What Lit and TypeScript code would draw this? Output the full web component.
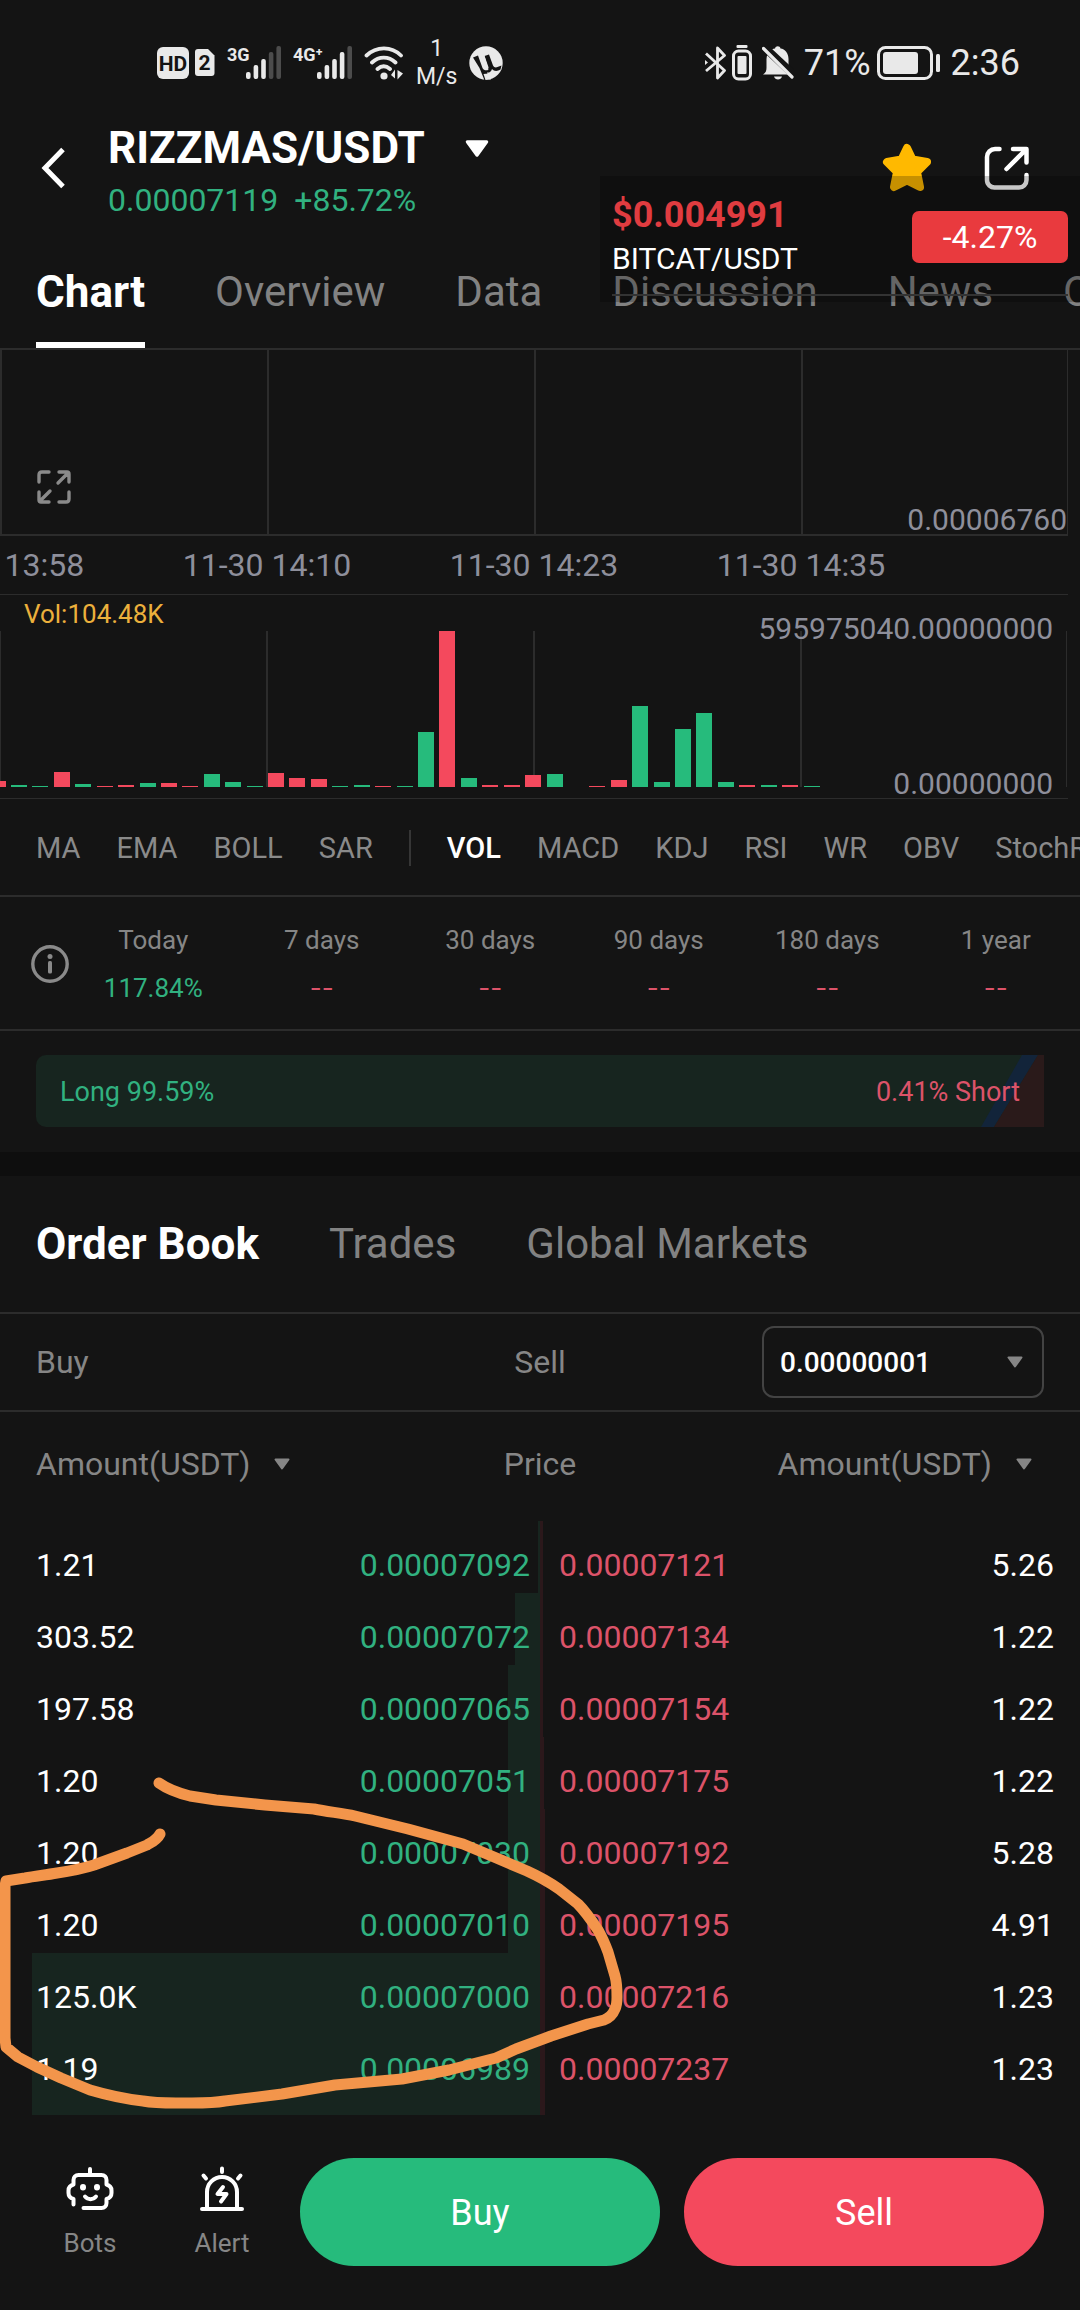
import { LitElement, html, svg, css } from "lit";
import { customElement, state } from "lit/decorators.js";
import { classMap } from "lit/directives/class-map.js";
import { styleMap } from "lit/directives/style-map.js";

type Side = "up" | "down";

/** Volume bars in drawing order: [slot, side, height]. */
const VOLUME: [number, Side, number][] = [
  [0, "down", 6], [1, "up", 2], [2, "up", 1], [3, "down", 15], [4, "up", 3],
  [5, "down", 1], [6, "down", 2], [7, "up", 4], [8, "down", 4], [9, "down", 1],
  [10, "up", 13], [11, "up", 5], [12, "up", 1], [13, "down", 14], [14, "down", 9],
  [15, "down", 8], [16, "up", 1], [17, "up", 2], [18, "down", 1], [19, "up", 1],
  [20, "up", 55], [21, "down", 156], [22, "up", 9], [23, "down", 2], [24, "down", 2],
  [25, "down", 12], [26, "up", 13], [28, "down", 1], [29, "down", 7], [30, "up", 81],
  [31, "up", 5], [32, "up", 58], [33, "up", 74], [34, "up", 5], [35, "down", 2],
  [36, "up", 2], [37, "down", 2], [38, "up", 1],
];

interface Level {
  bidAmount: string;
  bid: string;
  ask: string;
  askAmount: string;
  bidDepth: number;
  askDepth: number;
}

/** Depths are percentages of the full book width. */
const LEVELS: Level[] = [
  { bidAmount: "1.21", bid: "0.00007092", ask: "0.00007121", askAmount: "5.26", bidDepth: 0.2, askDepth: 0.3 },
  { bidAmount: "303.52", bid: "0.00007072", ask: "0.00007134", askAmount: "1.22", bidDepth: 2.3, askDepth: 0.3 },
  { bidAmount: "197.58", bid: "0.00007065", ask: "0.00007154", askAmount: "1.22", bidDepth: 3, askDepth: 0.3 },
  { bidAmount: "1.20", bid: "0.00007051", ask: "0.00007175", askAmount: "1.22", bidDepth: 3, askDepth: 0.4 },
  { bidAmount: "1.20", bid: "0.00007030", ask: "0.00007192", askAmount: "5.28", bidDepth: 3, askDepth: 0.5 },
  { bidAmount: "1.20", bid: "0.00007010", ask: "0.00007195", askAmount: "4.91", bidDepth: 3, askDepth: 0.5 },
  { bidAmount: "125.0K", bid: "0.00007000", ask: "0.00007216", askAmount: "1.23", bidDepth: 47, askDepth: 0.5 },
  { bidAmount: "1.19", bid: "0.00006989", ask: "0.00007237", askAmount: "1.23", bidDepth: 47, askDepth: 0.5 },
];

const STATS: [string, string][] = [
  ["Today", "117.84%"],
  ["7 days", "--"],
  ["30 days", "--"],
  ["90 days", "--"],
  ["180 days", "--"],
  ["1 year", "--"],
];

const caret = (cls: string) => html`
  <svg class=${cls} viewBox="0 0 16 12" aria-hidden="true">
    <path d="M1.5 1.5h13L8 10.500z" fill="currentColor" stroke="currentColor" stroke-width="2" stroke-linejoin="round" />
  </svg>
`;

const signal = (label: string, start: number, width: number, lit: number) => html`
  <svg width=${width} height="36" viewBox="0 0 ${width} 36" aria-hidden="true">
    <text x="0" y="16" class="net">${label}</text>
    ${[27, 20, 14, 7, 1].map(
      (top, i) => svg`<rect x=${start + i * 7.6} y=${top} width="4.600" height=${34 - top} rx="2"
        fill=${i < lit ? "#e9e9e9" : "#4c4c4c"} />`,
    )}
  </svg>
`;

@customElement("app-root")
export class AppRoot extends LitElement {
  @state() private section = "Chart";
  @state() private book = "Order Book";
  @state() private indicator = "VOL";

  static styles = css`
    :host {
      display: block;
      background: #141414;
      color: #fff;
      font-family: Roboto, "Liberation Sans", sans-serif;
      font-size: 32px;
      line-height: 40px;
      overflow: hidden;
      --line: #2c2c2c;
      --muted: #868686;
      --axis: #8e8f9b;
      --up: #26bb7c;
      --down: #f4495d;
      --up-text: #31b180;
      --down-text: #dc5369;
    }
    * { box-sizing: border-box; }
    svg { display: block; flex: none; }
    button {
      appearance: none;
      border: 0;
      margin: 0;
      padding: 0;
      background: none;
      color: inherit;
      font: inherit;
      cursor: pointer;
      white-space: nowrap;
    }
    .page { position: relative; }

    .status {
      display: flex;
      justify-content: space-between;
      align-items: center;
      height: 112px;
      padding: 14px 60px 0 157px;
      color: #e9e9e9;
      font-size: 36px;
    }
    .status-group { display: flex; align-items: center; gap: 12px; }
    .status-group.system { gap: 10px; }
    .tight { display: flex; align-items: center; gap: 6px; }
    .rate { text-align: center; font-size: 23px; line-height: 28px; }
    .net { font: 700 18px Roboto, sans-serif; fill: #e9e9e9; }
    .hd { font: 700 21px Roboto, sans-serif; fill: #141414; }

    .header { display: flex; padding: 12px 50px 0 36px; }
    .icon-button { height: 88px; display: flex; align-items: center; }
    .back { width: 72px; }
    .pair { flex: 1; display: flex; flex-direction: column; gap: 10px; }
    .pair-name {
      display: flex;
      align-items: center;
      gap: 40px;
      margin: 0;
      font-size: 44px;
      line-height: 48px;
      font-weight: 700;
    }
    .caret-big { width: 24px; height: 19px; }
    .pair-price { display: flex; gap: 16px; line-height: 36px; color: var(--up-text); }
    .header-actions { display: flex; gap: 52px; }

    .ticker {
      position: absolute;
      top: 176px;
      right: 0;
      width: 480px;
      padding: 0 12px 6px;
      background: rgba(0, 0, 0, 0.22);
    }
    .ticker-inner {
      display: flex;
      justify-content: space-between;
      align-items: center;
      padding: 19px 0 15px;
      border-bottom: 2px solid #333;
    }
    .ticker-price { font-size: 36px; font-weight: 700; color: #e03c40; margin-bottom: 4px; }
    .ticker-pair { font-size: 30px; }
    .ticker-badge {
      width: 156px;
      padding: 6px 0;
      border-radius: 7px;
      background: #e93a3e;
      text-align: center;
    }

    .tabs {
      display: flex;
      gap: 70px;
      padding-left: 36px;
      border-bottom: 2px solid var(--line);
      font-size: 42px;
      line-height: 48px;
      color: #828282;
      overflow: hidden;
    }
    .tab { padding: 50px 0 26px; border-bottom: 6px solid transparent; }
    .tab.active { color: #fff; font-size: 44px; font-weight: 700; border-color: #fff; }

    .chart { margin-right: 12px; overflow-x: clip; color: var(--axis); }
    .price-grid {
      display: grid;
      grid-template-columns: repeat(4, 1fr);
      height: 186px;
      border-bottom: 2px solid var(--line);
    }
    .price-cell { border-left: 2px solid var(--line); display: flex; align-items: flex-end; }
    .price-cell:last-child {
      border-right: 1px solid var(--line);
      justify-content: flex-end;
      font-size: 30px;
      line-height: 28px;
    }
    .expand { margin: 0 0 30px 35px; }
    .times {
      display: grid;
      grid-template-columns: repeat(4, 25%);
      margin-left: -12.5%;
      width: 100%;
      padding: 9px 0;
      text-align: center;
      white-space: nowrap;
    }
    .volume {
      position: relative;
      border-top: 1px solid var(--line);
      border-bottom: 1px solid var(--line);
      padding: 36px 0 11px;
    }
    .volume-plot { width: 100%; height: 156px; }
    .up { fill: var(--up); }
    .down { fill: var(--down); }
    .grid-line { fill: var(--line); }
    .volume-label { position: absolute; left: 24px; top: 0; font-size: 26px; line-height: 38px; color: #ecb03c; }
    .scale {
      position: absolute;
      inset: 20px 15px 0 0;
      display: flex;
      flex-direction: column;
      justify-content: space-between;
      align-items: flex-end;
      font-size: 30px;
      line-height: 28px;
    }

    .indicators {
      display: flex;
      align-items: center;
      gap: 36px;
      height: 98px;
      padding: 2px 0 0 36px;
      border-bottom: 2px solid var(--line);
      font-size: 29px;
      color: #8a8a8a;
      overflow: hidden;
    }
    .indicators .active { color: #fff; font-weight: 500; }
    .divider { flex: none; width: 2px; height: 36px; background: #363636; }

    .stats {
      display: flex;
      align-items: center;
      padding: 27px 0 25px 31px;
      border-bottom: 2px solid var(--line);
      font-size: 26px;
      line-height: 32px;
    }
    .stat-list { flex: 1; display: grid; grid-template-columns: repeat(6, 1fr); margin: 0; text-align: center; }
    .stat { display: flex; flex-direction: column; gap: 16px; }
    .stat dt { color: var(--muted); }
    .stat dd { margin: 0; color: var(--down-text); }
    .stat dd.none { font-family: Inter, sans-serif; }
    .stat dd.gain { color: var(--up-text); }

    .ratio-section { padding: 24px 36px 25px; border-bottom: 24px solid #0e0e0e; }
    .ratio {
      position: relative;
      display: flex;
      justify-content: space-between;
      align-items: center;
      height: 72px;
      padding: 2px 24px 0;
      border-radius: 10px 0 0 10px;
      background: #17251f;
      font-size: 27px;
      color: var(--up-text);
    }
    .ratio-edge { position: absolute; right: 0; top: 0; width: 66px; height: 72px; }
    .ratio-short { position: relative; color: var(--down-text); }

    .book-tabs .tab { padding: 44px 0; border: 0; }

    .filter {
      display: grid;
      grid-template-columns: 1fr auto 1fr;
      align-items: center;
      padding: 12px 36px;
      border-bottom: 2px solid var(--line);
      color: var(--muted);
    }
    .precision { display: grid; align-items: center; justify-self: end; width: 282px; }
    .precision select,
    .precision svg { grid-area: 1 / 1; }
    .precision svg { justify-self: end; margin-right: 21px; pointer-events: none; }
    .precision select {
      appearance: none;
      width: 100%;
      height: 72px;
      padding: 0 48px 0 16px;
      border: 2px solid #434343;
      border-radius: 12px;
      background: transparent;
      color: #fff;
      font: 500 28px Roboto, sans-serif;
    }
    .caret-small { width: 16px; height: 12px; }

    .book { position: relative; }
    table { width: 100%; table-layout: fixed; border-collapse: collapse; }
    .amount-col { width: 30%; }
    th { padding: 32px 0 37px; font-weight: 400; color: var(--muted); text-align: center; }
    th:first-child { text-align: left; padding-left: 36px; }
    th:last-child { text-align: right; padding-right: 48px; }
    .sort { display: inline-flex; align-items: center; gap: 24px; }
    .level {
      background: linear-gradient(
        90deg,
        transparent calc(50% - var(--bid)),
        #17251f calc(50% - var(--bid)) 50%,
        #2b181b 50% calc(50% + var(--ask)),
        transparent calc(50% + var(--ask))
      );
    }
    td { padding: 24px 0 8px; }
    td:first-child { padding-left: 36px; }
    td:last-child { padding-right: 26px; text-align: right; }
    .bid { padding-right: 10px; text-align: right; color: var(--up-text); }
    .ask { padding-left: 19px; color: var(--down-text); }
    .next-level { height: 18px; }
    .marker { position: absolute; left: 0; bottom: 0; width: 100%; pointer-events: none; }

    .footer { display: flex; align-items: center; padding: 43px 36px 44px 24px; }
    .tools { display: flex; width: 276px; flex: none; }
    .tool {
      width: 132px;
      display: flex;
      flex-direction: column;
      align-items: center;
      gap: 15px;
      font-size: 26px;
      line-height: 32px;
      color: var(--muted);
    }
    .tool svg { color: #fff; }
    .trades { flex: 1; display: flex; gap: 24px; }
    .trade { flex: 1; height: 108px; padding-top: 2px; border-radius: 54px; font-size: 36px; }
    .buy { background: var(--up); }
    .sell { background: var(--down); }
  `;

  private statusBar() {
    return html`
      <div class="status">
        <div class="status-group">
          <div class="tight">
            <svg width="32" height="32" viewBox="0 0 32 32" aria-hidden="true">
              <rect width="32" height="32" rx="6" fill="#e9e9e9" />
              <text x="16" y="23.500" text-anchor="middle" class="hd">HD</text>
            </svg>
            <svg width="20" height="28" viewBox="0 0 20 28" aria-hidden="true">
              <path d="M3 0h10l6.500 6.500V24a3 3 0 0 1-3 3H3a3 3 0 0 1-3-3V3a3 3 0 0 1 3-3z" fill="#e9e9e9" />
              <text x="9.500" y="21" text-anchor="middle" class="hd">2</text>
            </svg>
          </div>
          ${signal("3G", 19, 54, 3)} ${signal("4G⁺", 24, 59, 4)}
          <svg width="40" height="36" viewBox="0 0 40 36" fill="none" stroke="#e9e9e9" stroke-width="3.800" stroke-linecap="round" aria-hidden="true">
            <path d="M2.500 10.500C12.500 1 27.500 1 37 10.500M8 17.500c7-6.500 16.500-6.500 23.500 0M13.500 24c4-3.500 8.500-3.500 12.500 0" />
            <circle cx="20" cy="31" r="3.600" fill="#e9e9e9" stroke="none" />
            <path d="M27 30l4-5.500v9M33.500 34.500v-9.500l5.500 3.500z" fill="#e9e9e9" stroke="none" />
          </svg>
          <div class="rate"><div>1</div><div>M/s</div></div>
          <svg width="34" height="34" viewBox="0 0 34 34" aria-hidden="true">
            <circle cx="17" cy="17" r="16.700" fill="#e9e9e9" />
            <path d="M4 11.500l5-2 4.500 12.500c1 2.500 4.500 3 6 1.500L15.500 10l4.500-1.500 4 11c.800 2 3 2.500 4.500 1.500l4-1.500-1 4c-3 2-6.500 2-8.500-.5-1 3-3 4-5 3.500l3 8-5 1-5.500-13.500z" fill="#141414" />
            <path d="M13.500 10.500l2-.7 4 11.500c.500 1.700-2.800 2.600-3.500.7zM19.500 27.500l2.500 6-5.500.5-2-6z" fill="#e9e9e9" />
          </svg>
        </div>
        <div class="status-group system">
          <div class="tight">
            <svg width="21" height="36" viewBox="0 0 21 36" fill="none" stroke="#e9e9e9" stroke-width="2.800" stroke-linejoin="round" aria-hidden="true">
              <path d="M1 8.500l18.500 17-7 7.500V3l7 7.500L1 26" />
              <path d="M0 15l3 2.500L0 20z" fill="#e9e9e9" stroke="none" />
            </svg>
            <svg width="20" height="36" viewBox="0 0 20 36" aria-hidden="true">
              <rect x="4.500" y="0" width="11" height="3" rx="1" fill="#e9e9e9" />
              <rect x="1.500" y="6" width="17" height="28" rx="5" fill="none" stroke="#e9e9e9" stroke-width="3" />
              <rect x="5.500" y="11" width="9" height="18" rx="1" fill="#e9e9e9" />
            </svg>
          </div>
          <svg width="32" height="36" viewBox="0 0 32 36" aria-hidden="true">
            <path d="M1 29.500c3-2 3.500-4 3.500-7V14C5 7 9 4 13 3.500c.5-3 5-3 5.500 0C23 4 26.500 8 26.500 14v8c0 4 1 5 3.500 7.500z" fill="#e9e9e9" />
            <path d="M12 31.500h8c-1 4-7 4-8 0z" fill="#e9e9e9" />
            <path d="M0 0L32 30" stroke="#141414" stroke-width="8" />
            <path d="M1.500 3.500L30 32" stroke="#e9e9e9" stroke-width="3.200" stroke-linecap="round" />
          </svg>
          <div class="tight">
            <span>71%</span>
            <svg width="64" height="34" viewBox="0 0 64 34" aria-hidden="true">
              <rect x="1.500" y="1.500" width="53" height="31" rx="7" fill="none" stroke="#e9e9e9" stroke-width="3" />
              <rect x="6" y="6" width="35" height="22" rx="3" fill="#e9e9e9" />
              <rect x="59" y="8" width="4" height="18" rx="1.500" fill="#e9e9e9" />
            </svg>
          </div>
          <span>2:36</span>
        </div>
      </div>
    `;
  }

  private header() {
    return html`
      <header class="header">
        <button class="icon-button back" aria-label="Back">
          <svg width="32" height="42" viewBox="0 0 32 42" fill="none" stroke="#fff" stroke-width="5" aria-hidden="true">
            <path d="M27 2.500L9 21l18 18.500" />
          </svg>
        </button>
        <div class="pair">
          <h1 class="pair-name">RIZZMAS/USDT ${caret("caret-big")}</h1>
          <div class="pair-price"><span>0.00007119</span><span>+85.72%</span></div>
        </div>
        <div class="header-actions">
          <button class="icon-button" aria-label="Favorite">
            <svg width="50" height="50" viewBox="0 0 50 50" aria-hidden="true">
              <path d="M25 5l5.500 11.500L45 19 35 29l3 15-13-6.500L12 44l3-15L5 19l14.500-2.500z" fill="#ffb900" stroke="#ffb900" stroke-width="8" stroke-linejoin="round" />
            </svg>
          </button>
          <button class="icon-button" aria-label="Share">
            <svg width="46" height="46" viewBox="0 0 46 46" fill="none" stroke="#fff" stroke-width="4.500" stroke-linecap="round" aria-hidden="true">
              <path d="M15.500 4H11a8 8 0 0 0-8 8v23a7.500 7.500 0 0 0 8 7.500h24a7.500 7.500 0 0 0 7.500-7.500v-5" />
              <path d="M29 4h13.500v13.500M41 5.500L22.500 24" stroke-linejoin="round" />
            </svg>
          </button>
        </div>
      </header>
    `;
  }

  private tabList(cls: string, names: string[], current: string, pick: (n: string) => void) {
    return html`
      <nav class="tabs ${cls}">
        ${names.map(
          (n) => html`<button class=${classMap({ tab: true, active: n === current })} @click=${() => pick(n)}>${n}</button>`,
        )}
      </nav>
    `;
  }

  private chart() {
    return html`
      <section class="chart" aria-label="Price chart">
        <div class="price-grid">
          <div class="price-cell">
            <button class="expand" aria-label="Full screen">
              <svg width="34" height="34" viewBox="0 0 34 34" fill="none" stroke="#8a8a8a" stroke-width="3.400" stroke-linecap="round" stroke-linejoin="round" aria-hidden="true">
                <path d="M2 12V5q0-3 3-3h7M22 2h8q2 0 2 2v8M31 3L21 13M2 22v8q0 2 2 2h8M3 31l10-10M32 22v7q0 3-3 3h-7" />
              </svg>
            </button>
          </div>
          <div class="price-cell"></div>
          <div class="price-cell"></div>
          <div class="price-cell"><span>0.00006760</span></div>
        </div>
        <div class="times">
          <span>11-30 13:58</span><span>11-30 14:10</span><span>11-30 14:23</span><span>11-30 14:35</span>
        </div>
        <div class="volume">
          <svg class="volume-plot" viewBox="0 0 1068 156" preserveAspectRatio="none" aria-hidden="true">
            ${[0, 267, 534, 801, 1067].map(
              (x) => svg`<rect class="grid-line" x=${x ? x - 1 : 0} y="0" width=${x && x < 1067 ? 2 : 1} height="156" />`,
            )}
            ${VOLUME.map(
              ([slot, side, h]) =>
                svg`<rect class=${side} x=${Math.round(slot * 21.42 - 10.4)} y=${156 - h} width="16" height=${h} />`,
            )}
          </svg>
          <span class="volume-label">Vol:104.48K</span>
          <div class="scale"><span>595975040.00000000</span><span>0.00000000</span></div>
        </div>
      </section>
    `;
  }

  private indicators() {
    const item = (n: string) => html`
      <button class=${classMap({ active: n === this.indicator })} @click=${() => (this.indicator = n)}>${n}</button>
    `;
    return html`
      <div class="indicators">
        ${["MA", "EMA", "BOLL", "SAR"].map(item)}
        <span class="divider"></span>
        ${["VOL", "MACD", "KDJ", "RSI", "WR", "OBV", "StochRSI"].map(item)}
      </div>
    `;
  }

  private stats() {
    return html`
      <section class="stats">
        <button aria-label="About performance">
          <svg width="38" height="40" viewBox="0 0 38 40" aria-hidden="true">
            <circle cx="19" cy="20" r="17.200" fill="none" stroke="#8a8a8a" stroke-width="3.400" />
            <circle cx="19" cy="12.500" r="2.500" fill="#8a8a8a" />
            <rect x="17" y="17" width="4" height="12.500" rx="1.500" fill="#8a8a8a" />
          </svg>
        </button>
        <dl class="stat-list">
          ${STATS.map(
            ([label, value]) => html`
              <div class="stat">
                <dt>${label}</dt>
                <dd class=${value === "--" ? "none" : "gain"}>${value}</dd>
              </div>
            `,
          )}
        </dl>
      </section>
      <section class="ratio-section">
        <div class="ratio">
          <span>Long 99.59%</span>
          <svg class="ratio-edge" viewBox="0 0 66 72" aria-hidden="true">
            <path d="M44 0h16L16 72H3z" fill="#12243a" />
            <path d="M60 0h6v72H16z" fill="#2a1a1a" />
          </svg>
          <span class="ratio-short">0.41% Short</span>
        </div>
      </section>
    `;
  }

  private depth(l: Level) {
    return styleMap({ "--bid": `${l.bidDepth}%`, "--ask": `${l.askDepth}%` });
  }

  private orderBook() {
    return html`
      <div class="filter">
        <span>Buy</span>
        <span>Sell</span>
        <div class="precision">
          <select aria-label="Price precision">
            <option>0.00000001</option>
            <option>0.0000001</option>
            <option>0.000001</option>
          </select>
          ${caret("caret-small")}
        </div>
      </div>
      <div class="book">
        <table>
          <colgroup>
            <col class="amount-col" />
            <col />
            <col />
            <col class="amount-col" />
          </colgroup>
          <thead>
            <tr>
              <th scope="col"><button class="sort">Amount(USDT) ${caret("caret-small")}</button></th>
              <th scope="colgroup" colspan="2">Price</th>
              <th scope="col"><button class="sort">Amount(USDT) ${caret("caret-small")}</button></th>
            </tr>
          </thead>
          <tbody>
            ${LEVELS.map(
              (l) => html`
                <tr class="level" style=${this.depth(l)}>
                  <td>${l.bidAmount}</td>
                  <td class="bid">${l.bid}</td>
                  <td class="ask">${l.ask}</td>
                  <td>${l.askAmount}</td>
                </tr>
              `,
            )}
          </tbody>
        </table>
        <div class="level next-level" style=${this.depth(LEVELS[LEVELS.length - 1])}></div>
        <svg class="marker" viewBox="0 1765 1080 350" fill="none" stroke="#f3954b" stroke-width="11" stroke-linecap="round" stroke-linejoin="round" aria-hidden="true">
          <path d="M159 1783C166 1788 178 1793 190 1796L216 1800 265 1805 314 1809C328 1812 342 1813 355 1816L408 1829 463 1844 494 1857 527 1871C538 1876 549 1882 559 1889L578 1904C586 1912 592 1921 598 1930 602 1937 605 1944 608 1952L615 1976C617 1983 617 1990 617 1997 617 2001 617 2005 615 2009 613 2014 609 2018 604 2020L588 2024 551 2036 516 2049 496 2058 449 2070 402 2079 335 2085 282 2094 225 2101C214 2103 203 2103 192 2103H176C165 2103 154 2103 143 2101 125 2099 107 2095 90 2090L61 2078 37 2067 18 2057 6 2047 5 2038V1886L6 1881 25 1878C36 1876 46 1875 57 1873 70 1871 82 1869 94 1865 105 1861 116 1857 127 1853L147 1845C152 1842 157 1840 160 1834" />
        </svg>
      </div>
    `;
  }

  private footer() {
    return html`
      <footer class="footer">
        <div class="tools">
          <button class="tool">
            <svg width="50" height="46" viewBox="0 0 50 46" fill="none" stroke="currentColor" stroke-width="4" stroke-linecap="round" stroke-linejoin="round" aria-hidden="true">
              <path d="M25 3v6M8.500 38.500V33C5 32 3.500 30 3.500 27v-2.500c0-3 1.500-5 5-6V14c0-3 2-5 5-5h23c3 0 5 2 5 5v4.500c3.500 1 5 3 5 6V27c0 3-1.500 5-5 6v4c0 3-2 5-5 5h-18M20 30.500c3 3.500 8 3.500 11 0" />
              <path d="M18 21v.5M32 21v.5" stroke-width="6" />
            </svg>
            Bots
          </button>
          <button class="tool">
            <svg width="46" height="46" viewBox="0 0 46 46" fill="none" stroke="currentColor" stroke-width="4" stroke-linecap="round" stroke-linejoin="round" aria-hidden="true">
              <path d="M3 43h40M8 43V26a15 15 0 0 1 30 0v17M23 2.500V6M4.500 9.500L7 12.500M41.500 9.500L39 12.500M24 21l-5.500 7h9L22 35.500" />
            </svg>
            Alert
          </button>
        </div>
        <div class="trades">
          <button class="trade buy">Buy</button>
          <button class="trade sell">Sell</button>
        </div>
      </footer>
    `;
  }

  render() {
    return html`
      <main class="page">
        ${this.statusBar()} ${this.header()}
        ${this.tabList("", ["Chart", "Overview", "Data", "Discussion", "News", "Orders"], this.section, (n) => (this.section = n))}
        ${this.chart()} ${this.indicators()} ${this.stats()}
        ${this.tabList("book-tabs", ["Order Book", "Trades", "Global Markets"], this.book, (n) => (this.book = n))}
        ${this.orderBook()} ${this.footer()}
        <aside class="ticker" aria-label="Price ticker">
          <div class="ticker-inner">
            <div>
              <div class="ticker-price">$0.004991</div>
              <div class="ticker-pair">BITCAT/USDT</div>
            </div>
            <div class="ticker-badge">-4.27%</div>
          </div>
        </aside>
      </main>
    `;
  }
}
